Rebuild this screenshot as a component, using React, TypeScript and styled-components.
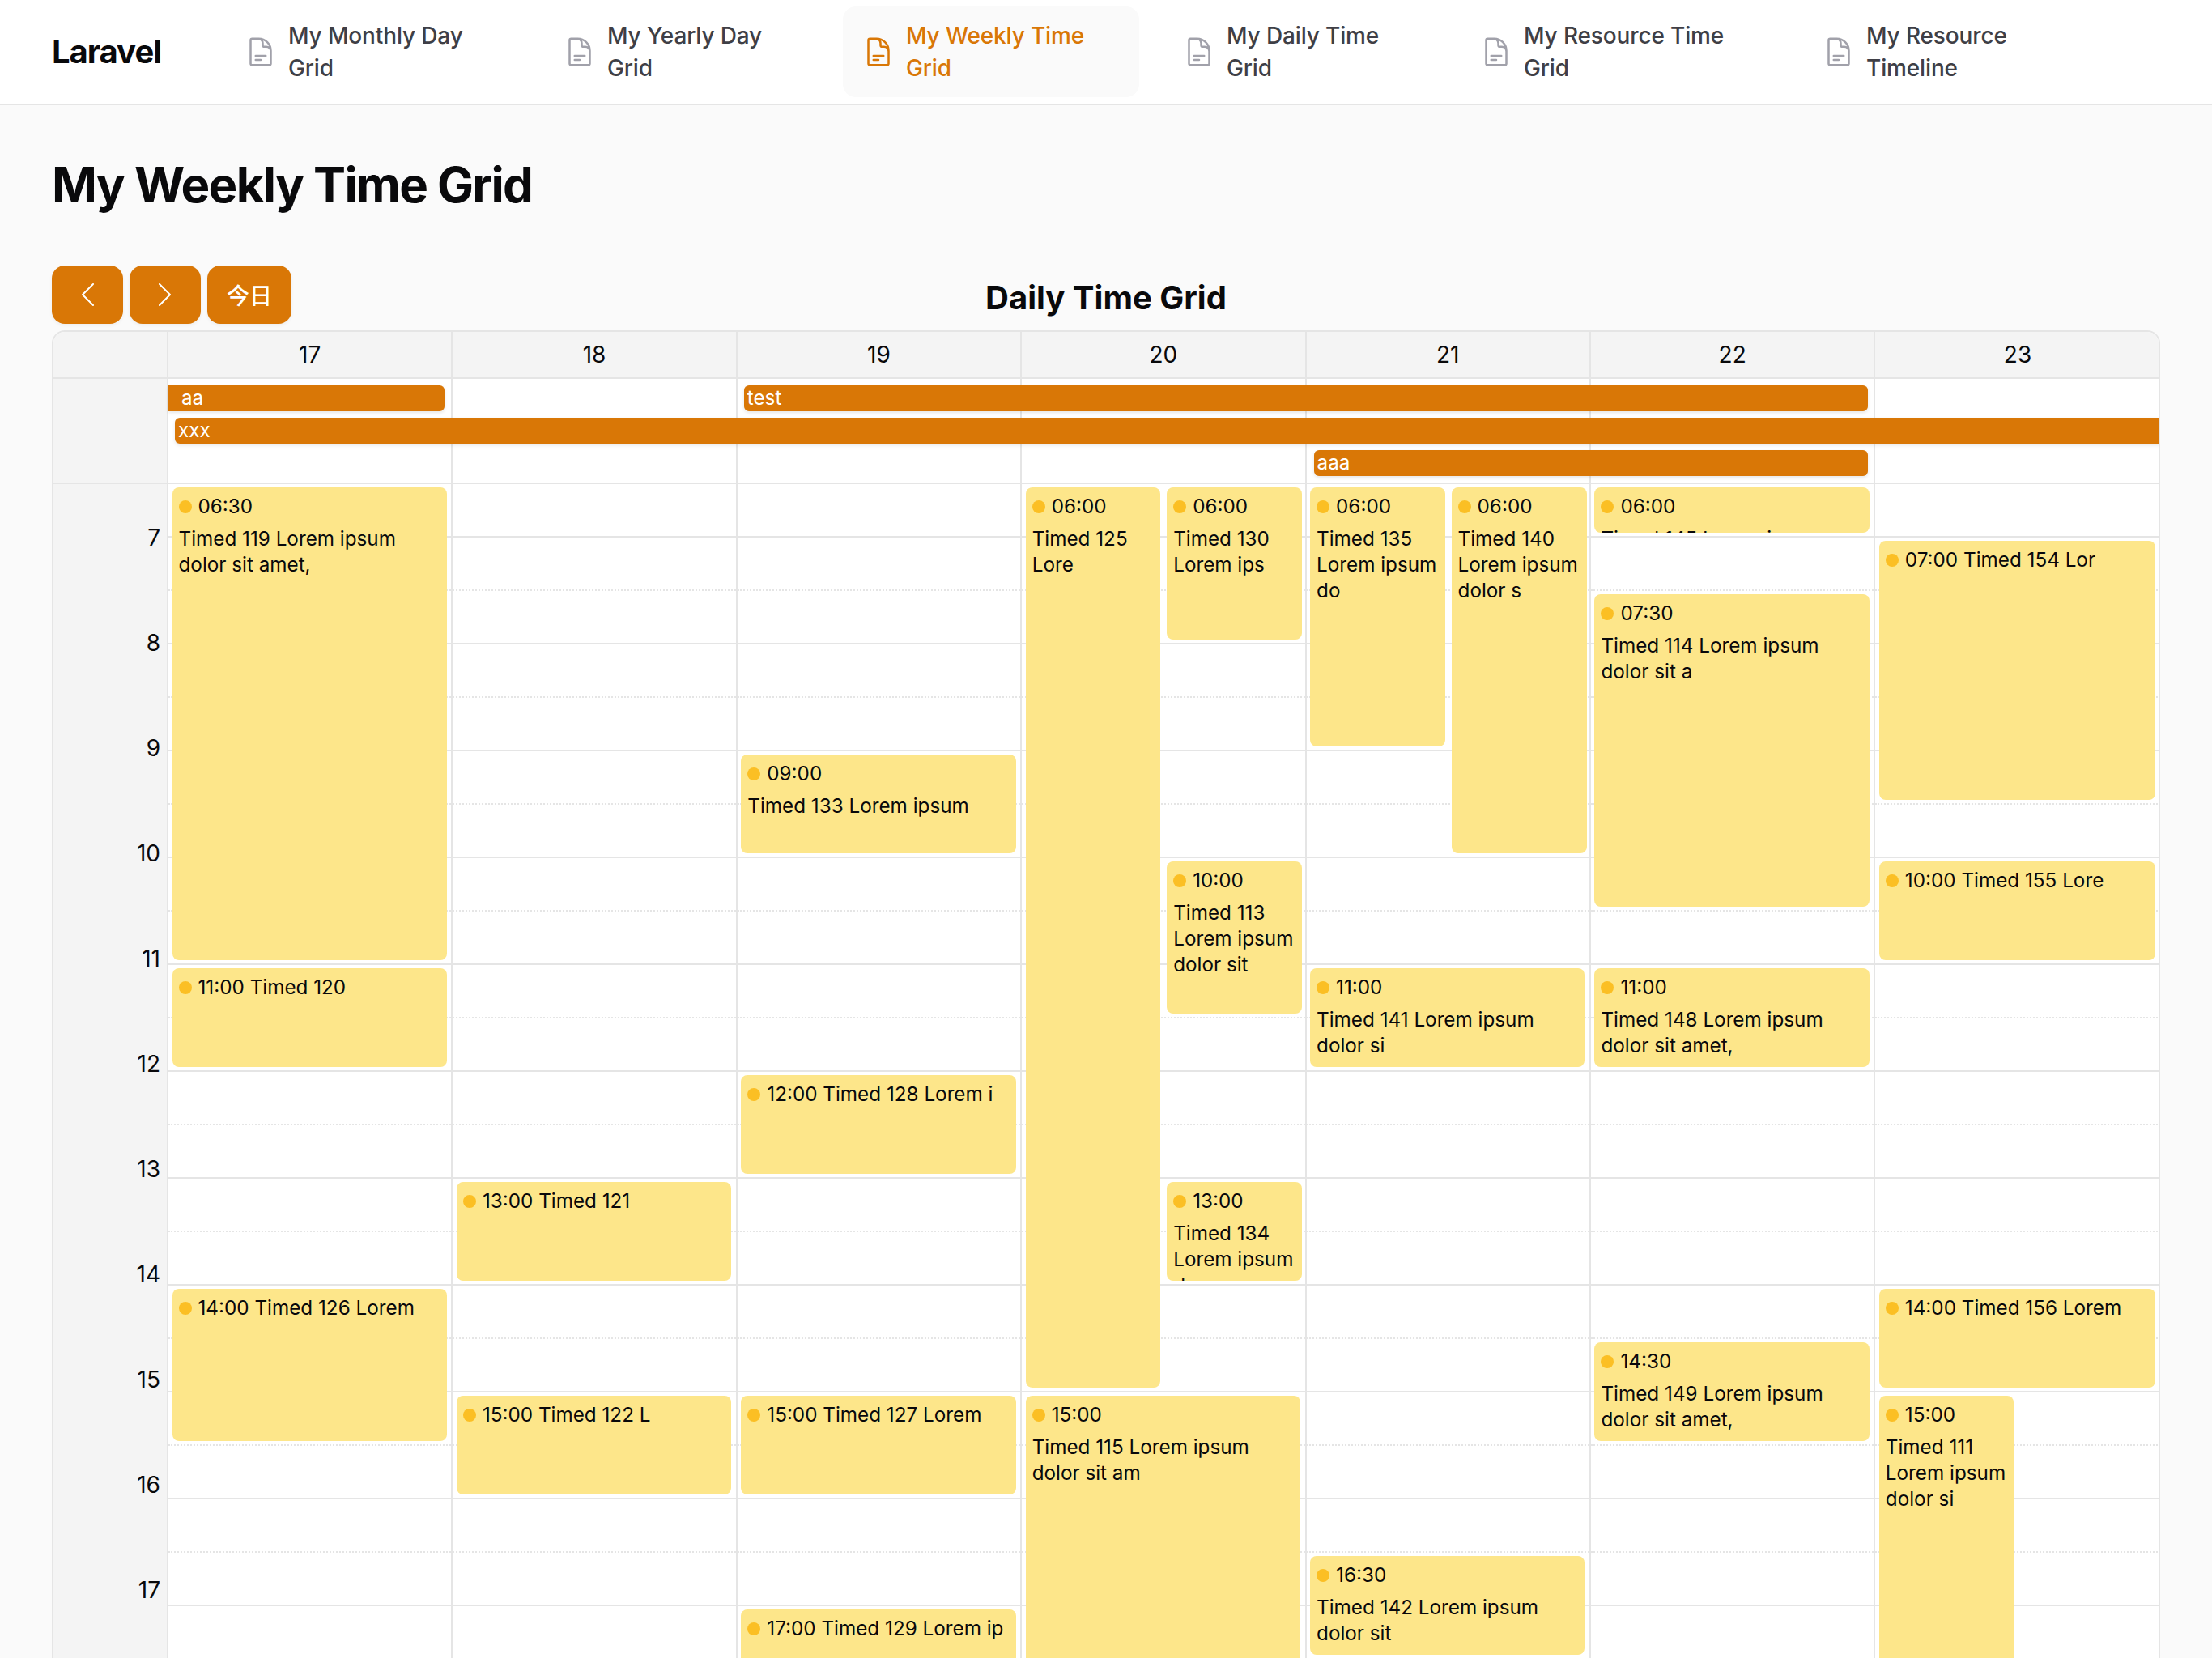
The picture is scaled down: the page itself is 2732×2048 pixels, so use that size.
import React from 'react';
import styled, { createGlobalStyle, css } from 'styled-components';
import { HiOutlineDocumentText } from 'react-icons/hi2';

const colors = {
  orange: '#d97706',
  event: '#fde68a',
  dot: '#fbbf24',
  line: '#e5e5e5',
  muted: '#f4f4f4',
  page: '#fafafa',
  ink: '#09090b',
  navText: '#3f3f46',
  navIcon: '#a1a1aa',
};

const GlobalStyle = createGlobalStyle`
  html, body {
    margin: 0;
    height: 2048px;
    overflow: hidden;
    background: ${colors.page};
    font-family: Inter, "Noto Sans CJK SC", sans-serif;
    color: ${colors.ink};
  }
  * {
    box-sizing: border-box;
  }
`;

const TopBar = styled.header`
  display: flex;
  align-items: center;
  height: 130px;
  padding: 0 64px;
  background: #fff;
  border-bottom: 2px solid ${colors.line};
`;

const Brand = styled.div`
  width: 214px;
  flex: none;
  font-size: 40px;
  line-height: 56px;
  font-weight: 700;
  letter-spacing: -0.025em;
`;

const NavList = styled.nav`
  display: flex;
  gap: 30px;
`;

const NavItem = styled.a<{ $width: number; $active?: boolean }>`
  display: flex;
  align-items: center;
  gap: 14px;
  width: ${p => p.$width}px;
  height: 112px;
  padding: 0 24px;
  border-radius: 16px;
  font-size: 28px;
  line-height: 40px;
  font-weight: 500;
  letter-spacing: -0.005em;
  color: ${p => (p.$active ? colors.orange : colors.navText)};
  background: ${p => (p.$active ? colors.page : 'transparent')};
`;

const NavIcon = styled(HiOutlineDocumentText)<{ $active?: boolean }>`
  flex: none;
  width: 40px;
  height: 40px;
  color: ${p => (p.$active ? colors.orange : colors.navIcon)};
`;

const Main = styled.main`
  padding: 62px 64px 0;
`;

const PageTitle = styled.h1`
  margin: 0 0 64px;
  font-size: 60px;
  line-height: 72px;
  font-weight: 700;
  letter-spacing: -0.0275em;
`;

const Toolbar = styled.div`
  display: grid;
  grid-template-columns: 1fr auto 1fr;
  align-items: center;
  margin-bottom: 8px;
`;

const ButtonGroup = styled.div`
  display: flex;
  gap: 8px;
`;

const ToolButton = styled.button`
  display: flex;
  align-items: center;
  justify-content: center;
  height: 72px;
  min-width: 88px;
  padding: 0 24px;
  border: 0;
  border-radius: 16px;
  background: ${colors.orange};
  color: #fff;
  font-family: inherit;
  font-size: 28px;
  font-weight: 500;
  box-shadow: 0 2px 4px rgba(0, 0, 0, 0.05);
`;

const CalendarTitle = styled.h2`
  margin: 8px 0 0;
  font-size: 40px;
  line-height: 60px;
  font-weight: 700;
`;

const Calendar = styled.section`
  border: 2px solid ${colors.line};
  border-bottom: 0;
  border-radius: 16px 16px 0 0;
  background: #fff;
  overflow: hidden;
`;

// the last day runs a little under the calendar's right border
const calendarColumns = css`
  display: grid;
  grid-template-columns: 142px repeat(7, 351.4px);
`;

const HeaderRow = styled.div`
  ${calendarColumns};
  height: 58px;
  background: ${colors.muted};
  border-bottom: 2px solid ${colors.line};
`;

const HeaderCell = styled.div<{ $last?: boolean }>`
  display: flex;
  align-items: center;
  justify-content: center;
  font-size: 28px;
  line-height: 40px;
  border-right: ${p => (p.$last ? '0' : `2px solid ${colors.line}`)};
`;

const AllDaySection = styled.div`
  ${calendarColumns};
  grid-template-rows: 8px 32px 8px 32px 8px 32px 8px;
  border-bottom: 2px solid ${colors.line};
`;

const AllDayAxis = styled.div`
  grid-column: 1;
  grid-row: 1 / -1;
  background: ${colors.muted};
  border-right: 2px solid ${colors.line};
`;

const AllDayColumn = styled.div<{ $index: number }>`
  grid-column: ${p => p.$index + 2};
  grid-row: 1 / -1;
  border-right: ${p => (p.$index === 6 ? '0' : `2px solid ${colors.line}`)};
`;

const AllDayBar = styled.div<{
  $from: number;
  $to: number;
  $row: number;
  $left: number;
  $right: number;
  $pad: number;
}>`
  grid-column: ${p => p.$from + 2} / ${p => p.$to + 3};
  grid-row: ${p => p.$row * 2 + 2};
  margin-left: ${p => p.$left}px;
  margin-right: ${p => p.$right}px;
  padding-left: ${p => p.$pad}px;
  border-radius: ${p => (p.$left ? '6px' : '0')} ${p => (p.$right ? '6px 6px' : '0 0')} ${p => (p.$left ? '6px' : '0')};
  background: ${colors.orange};
  color: #fff;
  font-size: 24.25px;
  line-height: 32px;
  box-shadow: 0 2px 4px rgba(0, 0, 0, 0.1);
`;

const TimeBody = styled.div`
  ${calendarColumns};
`;

const Axis = styled.div`
  background: ${colors.muted};
  border-right: 2px solid ${colors.line};
`;

const AxisSlot = styled.div`
  display: flex;
  align-items: flex-end;
  justify-content: flex-end;
  height: 65px;
  padding-right: 8px;
`;

const AxisLabel = styled.span`
  margin-bottom: -21px;
  font-size: 28px;
  line-height: 40px;
`;

const DayColumn = styled.div<{ $last?: boolean }>`
  position: relative;
  border-right: ${p => (p.$last ? '0' : `2px solid ${colors.line}`)};
`;

const Slot = styled.div<{ $hour: boolean }>`
  height: 66px;
  border-bottom: 2px ${p => (p.$hour ? 'solid' : 'dotted')} ${colors.line};
`;

const lanes = {
  full: css`
    left: 4.5px;
    right: 5.5px;
  `,
  start: css`
    left: 4.5px;
    width: 166.5px;
  `,
  end: css`
    left: 179px;
    width: 167px;
  `,
};

const EventCard = styled.div<{ $lane: keyof typeof lanes }>`
  position: absolute;
  ${p => lanes[p.$lane]};
  padding: 8px 8px 0;
  border-radius: 8px;
  background: ${colors.event};
  font-size: 24.25px;
  line-height: 32px;
  overflow: hidden;
`;

const EventTime = styled.div`
  display: flex;
  align-items: center;
  gap: 8px;
  white-space: nowrap;
`;

const EventDot = styled.span`
  flex: none;
  width: 16px;
  height: 16px;
  border-radius: 50%;
  background: ${colors.dot};
`;

const EventTitle = styled.div`
  margin-top: 8px;
`;

type CalEvent = {
  time: string;
  title: string;
  start: number;
  end: number;
  lane?: keyof typeof lanes;
  inline?: boolean;
};

const firstHour = 6.5;
const hourHeight = 132;
const slotCount = 22;

const navItems = [
  { label: 'My Monthly Day Grid', width: 364 },
  { label: 'My Yearly Day Grid', width: 339 },
  { label: 'My Weekly Time Grid', width: 366, active: true },
  { label: 'My Daily Time Grid', width: 337 },
  { label: 'My Resource Time Grid', width: 393 },
  { label: 'My Resource Timeline', width: 340 },
];

const days = ['17', '18', '19', '20', '21', '22', '23'];

const allDayBars = [
  { label: 'aa', from: 0, to: 0, row: 0, left: 0, right: 10, pad: 16 },
  { label: 'test', from: 2, to: 5, row: 0, left: 8, right: 9, pad: 4 },
  { label: 'xxx', from: 0, to: 6, row: 1, left: 8, right: 0, pad: 4 },
  { label: 'aaa', from: 4, to: 5, row: 2, left: 9, right: 9, pad: 4 },
];

const events: CalEvent[][] = [
  [
    { time: '06:30', title: 'Timed 119 Lorem ipsum dolor sit amet,', start: 6.5, end: 11 },
    { time: '11:00', title: 'Timed 120', start: 11, end: 12, inline: true },
    { time: '14:00', title: 'Timed 126 Lorem', start: 14, end: 15.5, inline: true },
  ],
  [
    { time: '13:00', title: 'Timed 121', start: 13, end: 14, inline: true },
    { time: '15:00', title: 'Timed 122 L', start: 15, end: 16, inline: true },
  ],
  [
    { time: '09:00', title: 'Timed 133 Lorem ipsum', start: 9, end: 10 },
    { time: '12:00', title: 'Timed 128 Lorem i', start: 12, end: 13, inline: true },
    { time: '15:00', title: 'Timed 127 Lorem', start: 15, end: 16, inline: true },
    { time: '17:00', title: 'Timed 129 Lorem ip', start: 17, end: 18, inline: true },
  ],
  [
    { time: '06:00', title: 'Timed 125 Lore', start: 6.5, end: 15, lane: 'start' },
    { time: '06:00', title: 'Timed 130 Lorem ips', start: 6.5, end: 8, lane: 'end' },
    { time: '10:00', title: 'Timed 113 Lorem ipsum dolor sit', start: 10, end: 11.5, lane: 'end' },
    { time: '13:00', title: 'Timed 134 Lorem ipsum d', start: 13, end: 14, lane: 'end' },
    { time: '15:00', title: 'Timed 115 Lorem ipsum dolor sit am', start: 15, end: 19 },
  ],
  [
    { time: '06:00', title: 'Timed 135 Lorem ipsum do', start: 6.5, end: 9, lane: 'start' },
    { time: '06:00', title: 'Timed 140 Lorem ipsum dolor s', start: 6.5, end: 10, lane: 'end' },
    { time: '11:00', title: 'Timed 141 Lorem ipsum dolor si', start: 11, end: 12 },
    { time: '16:30', title: 'Timed 142 Lorem ipsum dolor sit', start: 16.5, end: 17.5 },
  ],
  [
    { time: '06:00', title: 'Timed 145 Lorem ipsum dolor sit', start: 6.5, end: 7 },
    { time: '07:30', title: 'Timed 114 Lorem ipsum dolor sit a', start: 7.5, end: 10.5 },
    { time: '11:00', title: 'Timed 148 Lorem ipsum dolor sit amet,', start: 11, end: 12 },
    { time: '14:30', title: 'Timed 149 Lorem ipsum dolor sit amet,', start: 14.5, end: 15.5 },
  ],
  [
    { time: '07:00', title: 'Timed 154 Lor', start: 7, end: 9.5, inline: true },
    { time: '10:00', title: 'Timed 155 Lore', start: 10, end: 11, inline: true },
    { time: '14:00', title: 'Timed 156 Lorem', start: 14, end: 15, inline: true },
    { time: '15:00', title: 'Timed 111 Lorem ipsum dolor si', start: 15, end: 19, lane: 'start' },
  ],
];

const Chevron = ({ flip }: { flip?: boolean }) => (
  <svg width="18" height="28" viewBox="0 0 18 28" fill="none" stroke="#fff" strokeWidth="2" strokeLinecap="round" strokeLinejoin="round">
    <path d={flip ? 'M2 1l13 13L2 27' : 'M16 1L3 14l13 13'} />
  </svg>
);

const TimedEvent = ({ event }: { event: CalEvent }) => (
  <EventCard
    $lane={event.lane || 'full'}
    style={{
      top: (event.start - firstHour) * hourHeight + 4,
      height: (event.end - event.start) * hourHeight - 10,
    }}
  >
    <EventTime>
      <EventDot />
      {event.inline ? `${event.time} ${event.title}` : event.time}
    </EventTime>
    {!event.inline && <EventTitle>{event.title}</EventTitle>}
  </EventCard>
);

const App = () => {
  const slots = Array.from({ length: slotCount }, (_, i) => i);

  return (
    <>
      <GlobalStyle />
      <TopBar>
        <Brand>Laravel</Brand>
        <NavList>
          {navItems.map(item => (
            <NavItem key={item.label} $width={item.width} $active={item.active}>
              <NavIcon $active={item.active} />
              <span>{item.label}</span>
            </NavItem>
          ))}
        </NavList>
      </TopBar>
      <Main>
        <PageTitle>My Weekly Time Grid</PageTitle>
        <Toolbar>
          <ButtonGroup>
            <ToolButton>
              <Chevron />
            </ToolButton>
            <ToolButton>
              <Chevron flip />
            </ToolButton>
            <ToolButton>今日</ToolButton>
          </ButtonGroup>
          <CalendarTitle>Daily Time Grid</CalendarTitle>
        </Toolbar>
        <Calendar>
          <HeaderRow>
            <HeaderCell />
            {days.map((day, i) => (
              <HeaderCell key={day} $last={i === 6}>
                {day}
              </HeaderCell>
            ))}
          </HeaderRow>
          <AllDaySection>
            <AllDayAxis />
            {days.map((day, i) => (
              <AllDayColumn key={day} $index={i} />
            ))}
            {allDayBars.map(bar => (
              <AllDayBar
                key={bar.label}
                $from={bar.from}
                $to={bar.to}
                $row={bar.row}
                $left={bar.left}
                $right={bar.right}
                $pad={bar.pad}
              >
                {bar.label}
              </AllDayBar>
            ))}
          </AllDaySection>
          <TimeBody>
            <Axis>
              {slots.map(i => (
                <AxisSlot key={i}>{i % 2 === 0 && <AxisLabel>{7 + i / 2}</AxisLabel>}</AxisSlot>
              ))}
            </Axis>
            {days.map((day, i) => (
              <DayColumn key={day} $last={i === 6}>
                {slots.map(s => (
                  <Slot key={s} $hour={s % 2 === 0} />
                ))}
                {events[i].map(event => (
                  <TimedEvent key={event.title} event={event} />
                ))}
              </DayColumn>
            ))}
          </TimeBody>
        </Calendar>
      </Main>
    </>
  );
};

export default App;
